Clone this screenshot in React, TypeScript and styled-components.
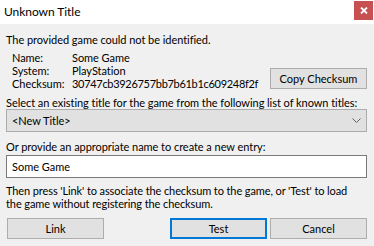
import React, { useState } from "react"
import styled, { createGlobalStyle } from "styled-components"

const GlobalStyle = createGlobalStyle`
  html, body {
    margin: 0;
    padding: 0;
    background: #f0f0f0;
  }
  * {
    box-sizing: border-box;
  }
`

const Window = styled.div`
  width: 374px;
  height: 246px;
  background: #f0f0f0;
  display: flex;
  flex-direction: column;
  font-family: Lato, "Noto Sans", sans-serif;
  font-size: 11px;
  letter-spacing: -0.05px;
  color: #000;
  overflow: hidden;
`

const TitleBar = styled.div`
  height: 24px;
  background: #fff;
  display: flex;
  justify-content: space-between;
  align-items: flex-start;
  padding-left: 4px;
  padding-right: 1px;
`

const TitleText = styled.div`
  font-size: 12px;
  line-height: 13px;
  margin-top: 5px;
`

const CloseButton = styled.button`
  width: 19px;
  height: 19px;
  margin-top: 1px;
  border: none;
  padding: 0;
  background: #c75050;
  display: flex;
  align-items: center;
  justify-content: center;
  cursor: pointer;
`

const Body = styled.div`
  flex: 1;
  display: flex;
  flex-direction: column;
  padding: 9px 7px 0 6px;
`

const Line = styled.div<{ gap?: number }>`
  line-height: 13px;
  height: 13px;
  margin-top: ${(p) => p.gap || 0}px;
  white-space: nowrap;
`

const InfoRow = styled.div`
  display: flex;
  justify-content: space-between;
  align-items: flex-end;
  margin-top: 5px;
`

const InfoGrid = styled.div`
  display: grid;
  grid-template-columns: 60px auto;
  grid-auto-rows: 13px;
  line-height: 13px;
  padding-left: 6px;
  white-space: nowrap;
`

const ChecksumValue = styled.span`
  letter-spacing: -0.3px;
`

const Button = styled.button<{ focused?: boolean }>`
  width: 97px;
  height: 21px;
  padding: 0;
  background: #e1e1e1;
  border: ${(p) => (p.focused ? "2px solid #0078d7" : "1px solid #adadad")};
  font-family: inherit;
  font-size: 11px;
  color: #000;
  line-height: 13px;
  white-space: nowrap;
  cursor: pointer;
`

const CopyButton = styled(Button)`
  margin-bottom: 1px;
`

const Combo = styled.div`
  height: 23px;
  background: #e1e1e1;
  border: 1px solid #acacac;
  display: flex;
  align-items: center;
  justify-content: space-between;
  padding: 0 5px 0 5px;
  line-height: 13px;
`

const TextInput = styled.input`
  height: 23px;
  margin-top: 2px;
  background: #fff;
  border: 1px solid #7a7a7a;
  padding: 0 5px;
  font-family: inherit;
  font-size: 11px;
  color: #000;
  outline: none;
`

const Paragraph = styled.div`
  line-height: 12.5px;
  margin-top: 7px;
  white-space: nowrap;
  letter-spacing: -0.1px;
`

const ButtonRow = styled.div`
  display: flex;
  justify-content: space-between;
  margin-top: 8px;
  padding-left: 1px;
`

const ButtonGroup = styled.div`
  display: flex;
  gap: 3px;
`

export default function App() {
  const [name, setName] = useState("Some Game")

  return (
    <Window>
      <GlobalStyle />
      <TitleBar>
        <TitleText>Unknown Title</TitleText>
        <CloseButton aria-label="Close">
          <svg width="8" height="7" viewBox="0 0 8 7">
            <path d="M1 0.5 L7 6.5 M7 0.5 L1 6.5" stroke="#fff" strokeWidth="1.8" />
          </svg>
        </CloseButton>
      </TitleBar>
      <Body>
        <Line>The provided game could not be identified.</Line>
        <InfoRow>
          <InfoGrid>
            <span>Name:</span>
            <span>Some Game</span>
            <span>System:</span>
            <span>PlayStation</span>
            <span>Checksum:</span>
            <ChecksumValue>30747cb3926757bb7b61b1c609248f2f</ChecksumValue>
          </InfoGrid>
          <CopyButton>Copy Checksum</CopyButton>
        </InfoRow>
        <Line gap={6}>Select an existing title for the game from the following list of known titles:</Line>
        <Combo>
          <span>&lt;New Title&gt;</span>
          <svg width="9" height="5" viewBox="0 0 9 5">
            <path d="M0.5 0.5 L4.5 4.5 L8.5 0.5" stroke="#606060" fill="none" strokeWidth="1" />
          </svg>
        </Combo>
        <Line gap={8}>Or provide an appropriate name to create a new entry:</Line>
        <TextInput value={name} onChange={(e) => setName(e.target.value)} />
        <Paragraph>
          Then press 'Link' to associate the checksum to the game, or 'Test' to load
          <br />
          the game without registering the checksum.
        </Paragraph>
        <ButtonRow>
          <Button>Link</Button>
          <ButtonGroup>
            <Button focused>Test</Button>
            <Button>Cancel</Button>
          </ButtonGroup>
        </ButtonRow>
      </Body>
    </Window>
  )
}
